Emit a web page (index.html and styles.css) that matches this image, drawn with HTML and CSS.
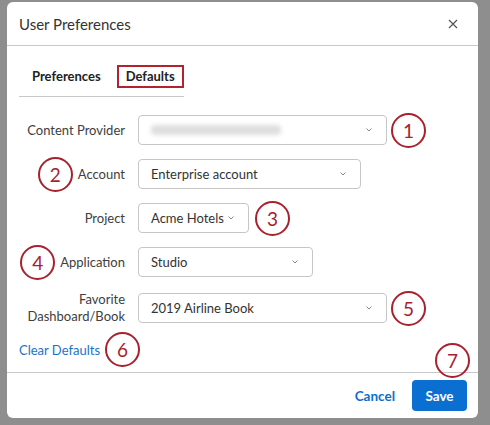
FILE: index.html
```html
<!DOCTYPE html>
<html lang="en">
<head>
    <meta charset="UTF-8">
    <meta name="viewport" content="width=device-width, initial-scale=1.0">
    <title>User Preferences</title>
    <link rel="stylesheet" href="styles.css">
</head>
<body>
    <div class="dialog">
        <div class="dialog-header">
            <h1 class="dialog-title">User Preferences</h1>
            <button class="close-button" aria-label="Close">
                <svg width="10" height="10" viewBox="0 0 10 10"><path d="M1 1 L9 9 M9 1 L1 9" stroke="#555" stroke-width="1.2" fill="none"/></svg>
            </button>
        </div>

        <div class="dialog-body">
            <!-- Tabs -->
            <div class="tabs">
                <div class="tab">Preferences</div>
                <div class="tab tab-marked">Defaults</div>
            </div>

            <!-- Default fields -->
            <div class="form">
                <div class="form-row">
                    <div class="field-label">Content Provider</div>
                    <div class="select select-wide">
                        <span class="blurred-value"></span>
                        <svg class="chevron" width="6" height="4" viewBox="0 0 6 4"><path d="M0.5 0.5 L3 3 L5.5 0.5" stroke="#888" fill="none"/></svg>
                    </div>
                    <span class="marker">1</span>
                </div>
                <div class="form-row">
                    <div class="field-label"><span class="marker">2</span>Account</div>
                    <div class="select select-account">
                        <span>Enterprise account</span>
                        <svg class="chevron" width="6" height="4" viewBox="0 0 6 4"><path d="M0.5 0.5 L3 3 L5.5 0.5" stroke="#888" fill="none"/></svg>
                    </div>
                </div>
                <div class="form-row">
                    <div class="field-label">Project</div>
                    <div class="select select-project">
                        <span>Acme Hotels</span>
                        <svg class="chevron" width="6" height="4" viewBox="0 0 6 4"><path d="M0.5 0.5 L3 3 L5.5 0.5" stroke="#888" fill="none"/></svg>
                    </div>
                    <span class="marker marker-near">3</span>
                </div>
                <div class="form-row">
                    <div class="field-label"><span class="marker">4</span>Application</div>
                    <div class="select select-app">
                        <span>Studio</span>
                        <svg class="chevron" width="6" height="4" viewBox="0 0 6 4"><path d="M0.5 0.5 L3 3 L5.5 0.5" stroke="#888" fill="none"/></svg>
                    </div>
                </div>
                <div class="form-row">
                    <div class="field-label">Favorite<br>Dashboard/Book</div>
                    <div class="select select-wide">
                        <span>2019 Airline Book</span>
                        <svg class="chevron" width="6" height="4" viewBox="0 0 6 4"><path d="M0.5 0.5 L3 3 L5.5 0.5" stroke="#888" fill="none"/></svg>
                    </div>
                    <span class="marker">5</span>
                </div>
            </div>

            <div class="clear-row">
                <a href="#" class="clear-link">Clear Defaults</a>
                <span class="marker">6</span>
            </div>
        </div>

        <div class="dialog-footer">
            <span class="marker marker-save">7</span>
            <button class="cancel-button">Cancel</button>
            <button class="save-button">Save</button>
        </div>
    </div>
</body>
</html>
```

FILE: styles.css
```css
body {
    margin: 0;
    padding: 0;
    background-color: #8e8e8e;
    font-family: Lato, "Open Sans", Arial, sans-serif;
    font-size: 13px;
    color: #333;
}

.dialog {
    position: relative;
    display: flex;
    flex-direction: column;
    width: 471px;
    height: 416px;
    margin: 2px 0 0 7px;
    background-color: #fff;
    border-radius: 6px;
}

.dialog-header {
    display: flex;
    align-items: center;
    justify-content: space-between;
    height: 43px;
    padding: 0 20px 0 12px;
    border-bottom: 1px solid #c8c8c8;
}

.dialog-title {
    margin: 0;
    font-size: 15px;
    font-weight: normal;
    color: #333;
}

.close-button {
    display: flex;
    padding: 0;
    border: none;
    background: none;
    cursor: pointer;
}

.dialog-body {
    flex: 1;
    padding: 19px 12px 0;
}

/* Tabs */
.tabs {
    display: flex;
    align-items: center;
    width: 165px;
    padding-bottom: 8px;
    border-bottom: 1px solid #c8c8c8;
}

.tab {
    height: 23px;
    line-height: 23px;
    font-weight: 700;
    color: #222;
}

.tab:first-child {
    padding-left: 13px;
    margin-right: 16px;
}

.tab-marked {
    box-sizing: border-box;
    width: 68px;
    padding-left: 7px;
    line-height: 19px;
    border: 2px solid #b3232f;
}

/* Form rows */
.form {
    display: flex;
    flex-direction: column;
    gap: 14px;
    margin-top: 18px;
}

.form-row {
    display: flex;
    align-items: center;
    gap: 13px;
}

.field-label {
    display: flex;
    align-items: center;
    justify-content: flex-end;
    gap: 5px;
    width: 106px;
    line-height: 17px;
    text-align: right;
    color: #404040;
}

.select {
    box-sizing: border-box;
    display: flex;
    align-items: center;
    justify-content: space-between;
    height: 30px;
    padding: 0 14px 0 12px;
    border: 1px solid #c6c6c6;
    border-radius: 4px;
    color: #333;
}

.select-wide {
    width: 249px;
}

.select-account {
    width: 223px;
}

.select-project {
    width: 111px;
}

.select-app {
    width: 175px;
}

.blurred-value {
    width: 130px;
    height: 10px;
    background-color: #dedede;
    border-radius: 4px;
    filter: blur(2px);
}

.chevron {
    flex-shrink: 0;
}

/* Numbered callouts */
.marker {
    box-sizing: border-box;
    display: inline-flex;
    align-items: center;
    justify-content: center;
    flex-shrink: 0;
    width: 35px;
    height: 35px;
    margin: -3px 0;
    border: 2px solid #a8222e;
    border-radius: 50%;
    font-size: 19px;
    color: #a8222e;
    background-color: #fff;
}

.form-row > .marker {
    margin-left: -9px;
}

.form-row > .marker-near {
    margin-left: -7px;
}

.clear-row {
    display: flex;
    align-items: center;
    gap: 5px;
    margin-top: 10px;
}

.clear-link {
    color: #1a73c7;
    text-decoration: none;
}

/* Footer */
.dialog-footer {
    position: relative;
    display: flex;
    align-items: center;
    justify-content: flex-end;
    height: 45px;
    padding: 0 11px;
    border-top: 1px solid #c8c8c8;
}

.marker-save {
    position: absolute;
    right: 8px;
    top: -30px;
    margin: 0;
    background-color: transparent;
}

.cancel-button {
    margin-right: 17px;
    padding: 0;
    border: none;
    background: none;
    font-family: inherit;
    font-size: 13.5px;
    font-weight: 700;
    color: #0b6fc9;
    cursor: pointer;
}

.save-button {
    width: 55px;
    height: 31px;
    border: none;
    border-radius: 4px;
    background-color: #0b6fd1;
    font-family: inherit;
    font-size: 13.5px;
    font-weight: 700;
    color: #fff;
    cursor: pointer;
}
```
